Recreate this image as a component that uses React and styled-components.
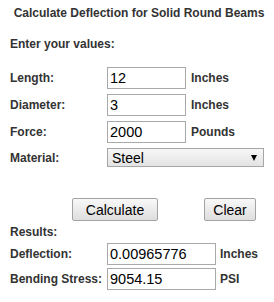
import React from "react";
import styled, { createGlobalStyle } from "styled-components";

const Global = createGlobalStyle`
  html, body { margin: 0; padding: 0; background: #fff; }
  body { font-family: "Liberation Sans", Arial, sans-serif; color: #333; }
`;

const Page = styled.div`
  width: 274px;
  box-sizing: border-box;
  padding: 6px 10px 0 10px;
  font-size: 12px;
  font-weight: bold;
`;

const Title = styled.div`
  margin: 0 -10px;
  text-align: center;
  white-space: nowrap;
  line-height: 14px;
  padding-left: 4px;
`;

const Heading = styled.div`
  line-height: 14px;
  margin-top: ${(p) => p.$top}px;
`;

const Form = styled.div`
  display: grid;
  grid-template-columns: 97px auto 1fr;
  align-items: center;
  row-gap: ${(p) => p.$gap}px;
  margin-top: ${(p) => p.$top}px;
`;

const Label = styled.label`
  line-height: 14px;
  white-space: nowrap;
`;

const Unit = styled.span`
  padding-left: ${(p) => p.$pad}px;
  line-height: 14px;
`;

const TextInput = styled.input`
  box-sizing: border-box;
  width: ${(p) => p.$w}px;
  height: 22px;
  margin: 0;
  padding: 0 2px;
  border: 1px solid #a9a9a9;
  border-radius: 0;
  font-family: "Liberation Sans", Arial, sans-serif;
  font-size: 14.5px;
  color: #000;
  background: #fff;
  outline: none;
`;

const SelectWrap = styled.div`
  position: relative;
  grid-column: 2 / 4;
  width: 157px;
  height: 19px;
  &::after {
    content: "";
    position: absolute;
    right: 7px;
    top: 7px;
    width: 0;
    height: 0;
    border-left: 3px solid transparent;
    border-right: 3px solid transparent;
    border-top: 6px solid #000;
    pointer-events: none;
  }
`;

const Select = styled.select`
  appearance: none;
  box-sizing: border-box;
  width: 100%;
  height: 100%;
  margin: 0;
  padding: 0 0 0 4px;
  border: 1px solid #a6a6a6;
  border-radius: 0;
  font-family: "Liberation Sans", Arial, sans-serif;
  font-size: 14px;
  color: #000;
  background: linear-gradient(#f7f7f7, #e3e3e3);
  outline: none;
`;

const Buttons = styled.div`
  display: flex;
  gap: 46px;
  padding-left: 62px;
  margin-top: 31px;
`;

const Button = styled.button`
  box-sizing: border-box;
  width: ${(p) => p.$w}px;
  height: 23px;
  margin: 0;
  padding: 0;
  border: 1px solid #a3a3a3;
  border-radius: 2px;
  font-family: "Liberation Sans", Arial, sans-serif;
  font-size: 14px;
  color: #000;
  background: linear-gradient(#f8f8f8, #dedede);
`;

export default function App() {
  return (
    <>
      <Global />
      <Page>
        <Title>Calculate Deflection for Solid Round Beams</Title>
        <Heading $top={17}>Enter your values:</Heading>
        <Form $top={16} $gap={5}>
          <Label>Length:</Label>
          <TextInput $w={79} defaultValue="12" />
          <Unit $pad={5}>Inches</Unit>
          <Label>Diameter:</Label>
          <TextInput $w={79} defaultValue="3" />
          <Unit $pad={5}>Inches</Unit>
          <Label>Force:</Label>
          <TextInput $w={79} defaultValue="2000" />
          <Unit $pad={5}>Pounds</Unit>
          <Label>Material:</Label>
          <SelectWrap>
            <Select defaultValue="Steel">
              <option>Steel</option>
              <option>Aluminum</option>
            </Select>
          </SelectWrap>
        </Form>
        <Buttons>
          <Button $w={86}>Calculate</Button>
          <Button $w={52}>Clear</Button>
        </Buttons>
        <Heading $top={4}>Results:</Heading>
        <Form $top={4} $gap={3}>
          <Label>Deflection:</Label>
          <TextInput $w={109} defaultValue="0.00965776" />
          <Unit $pad={4}>Inches</Unit>
          <Label>Bending Stress:</Label>
          <TextInput $w={109} defaultValue="9054.15" />
          <Unit $pad={4}>PSI</Unit>
        </Form>
      </Page>
    </>
  );
}
